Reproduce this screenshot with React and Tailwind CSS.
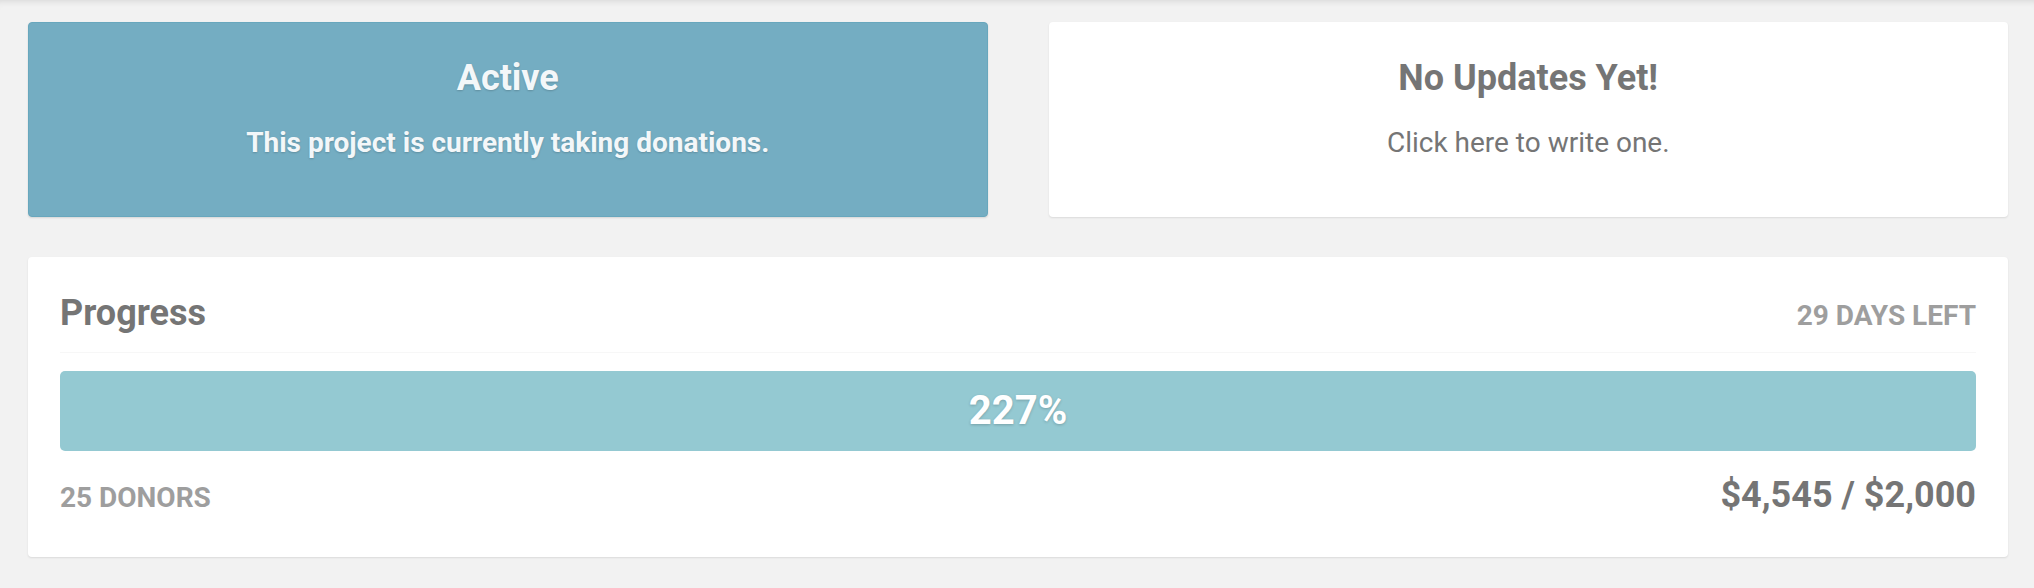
import React from 'react';

function StatusCard({ title, subtitle }) {
  return (
    <div className="h-[195px] rounded-[4px] border border-[#68a7bd] bg-[#74adc2] pt-[35px] text-center text-[#f3f7f9] shadow-[0_1px_2px_rgba(0,0,0,0.12)] [text-shadow:0_1px_2px_rgba(0,0,0,0.18)]">
      <h2 className="text-[36px] font-bold leading-[40px]">{title}</h2>
      <p className="mt-[29px] text-[28px] font-bold leading-[32px]">{subtitle}</p>
    </div>
  );
}

function UpdatesCard() {
  return (
    <div className="h-[195px] cursor-pointer rounded-[4px] bg-white pt-[36px] text-center text-[#757575] shadow-[0_1px_2px_rgba(0,0,0,0.1)]">
      <h2 className="text-[36px] font-bold leading-[40px]">No Updates Yet!</h2>
      <p className="mt-[29px] text-[28px] leading-[32px]">Click here to write one.</p>
    </div>
  );
}

function ProgressCard({ raised, goal, donors, daysLeft }) {
  const percent = Math.round((raised / goal) * 100);
  const fmt = (n) => '$' + n.toLocaleString('en-US');

  return (
    <div className="mt-[40px] rounded-[4px] bg-white px-[32px] pt-[36px] pb-[42px] shadow-[0_1px_2px_rgba(0,0,0,0.1)]">
      {/* header */}
      <div className="flex items-baseline justify-between border-b border-[#f7f7f7] pb-[19px]">
        <h3 className="text-[36px] font-bold leading-[40px] text-[#757575]">Progress</h3>
        <span className="text-[28px] font-bold uppercase leading-[32px] text-[#9e9e9e]">{daysLeft} days left</span>
      </div>

      {/* bar */}
      <div className="mt-[18px] flex h-[80px] items-center justify-center rounded-[5px] bg-[#94c9d2]">
        <span className="text-[40px] font-bold leading-none text-white [text-shadow:0_1px_3px_rgba(0,0,0,0.2)]">{percent}%</span>
      </div>

      {/* footer */}
      <div className="mt-[24px] flex items-baseline justify-between">
        <span className="text-[28px] font-bold uppercase leading-[32px] text-[#9e9e9e]">{donors} donors</span>
        <span className="text-[36px] font-bold leading-[40px] text-[#757575]">{fmt(raised)} / {fmt(goal)}</span>
      </div>
    </div>
  );
}

export default function App() {
  return (
    <div className="min-h-[588px] bg-[#f2f2f2] pt-[22px] pl-[28px] pr-[26px] [font-family:Roboto,'Liberation_Sans',sans-serif] shadow-[inset_0_7px_7px_-6px_rgba(0,0,0,0.12)]">
      <div className="grid grid-cols-2 gap-[61px]">
        <StatusCard title="Active" subtitle="This project is currently taking donations." />
        <UpdatesCard />
      </div>
      <ProgressCard raised={4545} goal={2000} donors={25} daysLeft={29} />
    </div>
  );
}
